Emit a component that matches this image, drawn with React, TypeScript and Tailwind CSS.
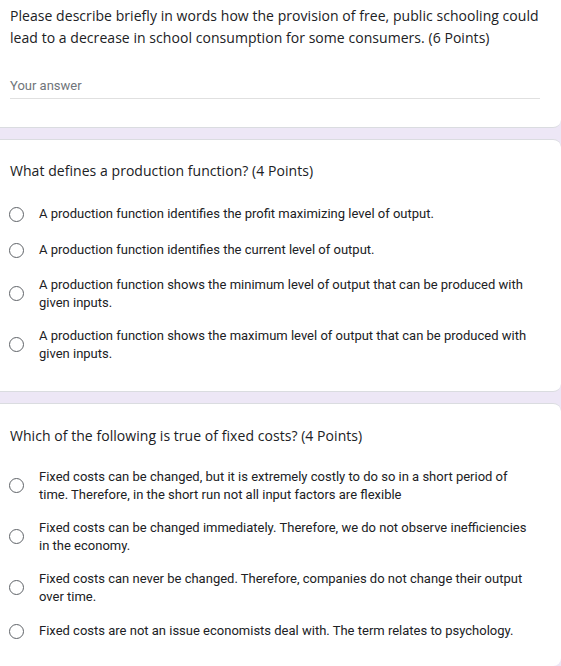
const questionTwo = [
  'A production function identifies the profit maximizing level of output.',
  'A production function identifies the current level of output.',
  'A production function shows the minimum level of output that can be produced with given inputs.',
  'A production function shows the maximum level of output that can be produced with given inputs.',
]

const questionThree = [
  'Fixed costs can be changed, but it is extremely costly to do so in a short period of time. Therefore, in the short run not all input factors are flexible',
  'Fixed costs can be changed immediately. Therefore, we do not observe inefficiencies in the economy.',
  'Fixed costs can never be changed. Therefore, companies do not change their output over time.',
  'Fixed costs are not an issue economists deal with. The term relates to psychology.',
]

function Radio({ label }: { label: string }) {
  return (
    <label className="flex min-h-[20px] items-center gap-[15px] pr-[5px]">
      <span className="-ml-px h-[15px] w-[15px] shrink-0 rounded-full border-[1.5px] border-[#5f6368] bg-white" />
      <span className="font-['Roboto',sans-serif] text-[13px] leading-[17.5px] text-[#202124]">
        {label}
      </span>
    </label>
  )
}

function ChoiceCard({
  title,
  options,
  className,
  listClassName,
}: {
  title: string
  options: string[]
  className: string
  listClassName: string
}) {
  return (
    <section className={`rounded-r-[8px] bg-white pl-[10px] pr-[21px] ${className}`}>
      <h2 className="font-['Open_Sans',sans-serif] text-[14px] leading-[20px] tracking-[0.05px] text-[#202124]">
        {title}
      </h2>
      <div className={`flex flex-col gap-[16px] ${listClassName}`}>
        {options.map((option) => (
          <Radio key={option} label={option} />
        ))}
      </div>
    </section>
  )
}

export default function App() {
  return (
    <div className="flex min-h-[666px] w-[561px] flex-col gap-[11px] bg-[#ede7f6]">
      <section className="rounded-br-[8px] border-b border-[#dadce0] bg-white pl-[10px] pr-[21px] pt-[5px]">
        <h2 className="font-['Open_Sans',sans-serif] text-[14px] leading-[22px] tracking-[0.05px] text-[#202124]">
          Please describe briefly in words how the provision of free, public schooling could lead
          to a decrease in school consumption for some consumers. (6 Points)
        </h2>
        <div className="mb-[28px] mt-[29px] border-b border-[#e0e0e0] pb-[4px] font-['Roboto',sans-serif] text-[13px] leading-[16px] text-[#70757a]">
          Your answer
        </div>
      </section>

      <ChoiceCard
        title="What defines a production function? (4 Points)"
        options={questionTwo}
        className="border-y border-[#dadce0] pt-[21px] pb-[29px]"
        listClassName="mt-[23px]"
      />

      <ChoiceCard
        title="Which of the following is true of fixed costs? (4 Points)"
        options={questionThree}
        className="flex-1 border-t border-[#dadce0] pt-[22px] pb-[20px]"
        listClassName="mt-[22px]"
      />
    </div>
  )
}
